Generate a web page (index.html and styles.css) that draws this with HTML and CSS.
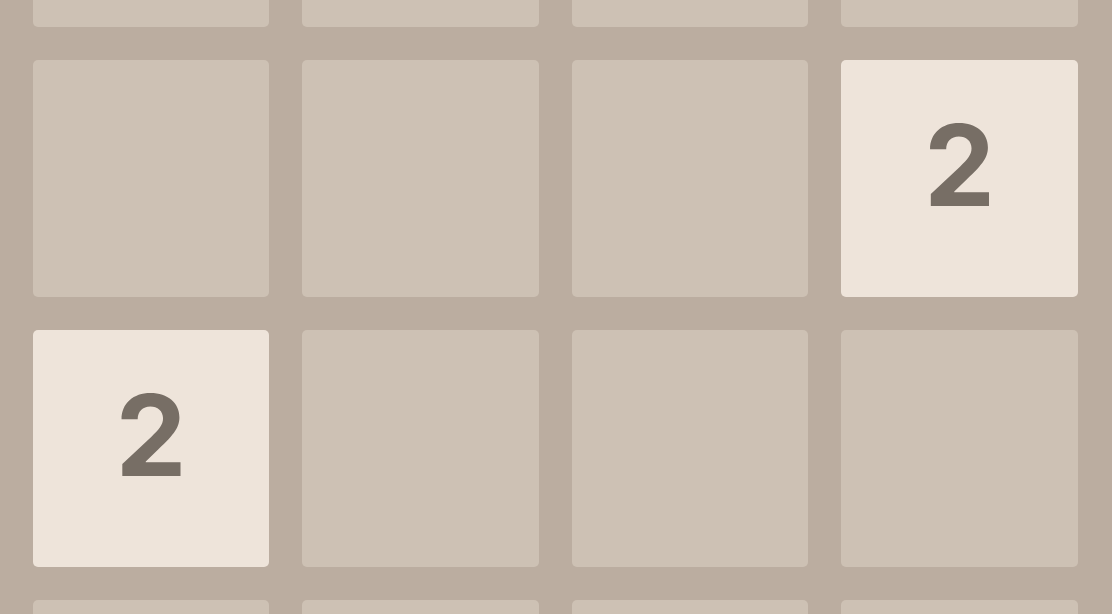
FILE: index.html
```html
<!DOCTYPE html>
<html lang="en">
<head>
<meta charset="utf-8">
<title>2048</title>
<link rel="stylesheet" href="styles.css">
</head>
<body>
  <div class="board">
    <div class="cell"></div>
    <div class="cell"></div>
    <div class="cell"></div>
    <div class="cell"></div>

    <div class="cell"></div>
    <div class="cell"></div>
    <div class="cell"></div>
    <div class="cell tile-2">2</div>

    <div class="cell tile-2">2</div>
    <div class="cell"></div>
    <div class="cell"></div>
    <div class="cell"></div>

    <div class="cell"></div>
    <div class="cell"></div>
    <div class="cell"></div>
    <div class="cell"></div>
  </div>
</body>
</html>
```

FILE: styles.css
```css
html, body {
  margin: 0;
  height: 100%;
  overflow: hidden;
  background: #bbada0;
}

.board {
  display: grid;
  grid-template-columns: repeat(4, 236.3px);
  grid-auto-rows: 236.5px;
  column-gap: 33.2px;
  row-gap: 33.5px;
  padding-left: 33px;
  margin-top: -210px;
}

.cell {
  background: #cdc1b4;
  border-radius: 5px;
}

.tile-2 {
  background: #eee4da;
  color: #776e65;
  font-family: Inter, "Open Sans", sans-serif;
  font-weight: 700;
  font-size: 113px;
  display: flex;
  align-items: center;
  justify-content: center;
  padding-bottom: 26px;
  box-sizing: border-box;
}
```
